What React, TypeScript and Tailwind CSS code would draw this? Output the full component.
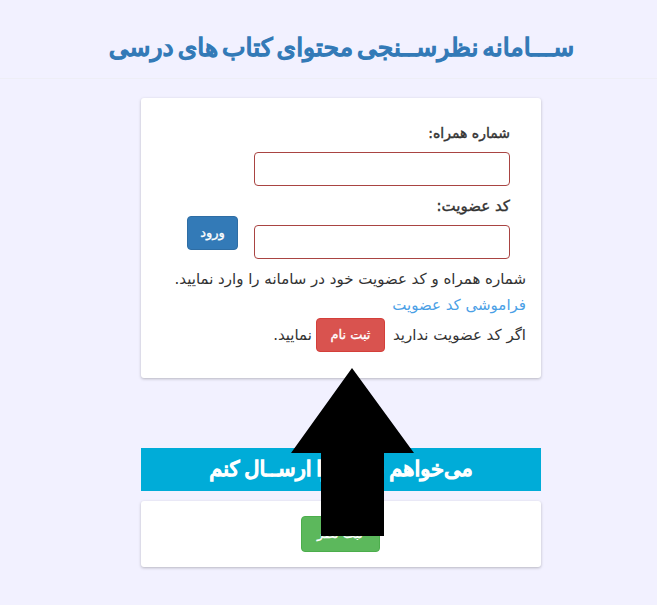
const font = { fontFamily: '"DejaVu Sans", "Noto Sans", sans-serif' };

export default function App() {
  return (
    <div dir="rtl" style={font} className="relative min-h-[605px] bg-[#f2f1ff] text-[15px] text-[#333333] overflow-hidden">
      {/* Header */}
      <div className="h-[79px] border-b border-[#eeeef6] flex items-center justify-center pl-[26px] pt-[18px]">
        <h1 className="text-[25px] leading-[30px] font-normal text-[#337ab7] whitespace-nowrap [word-spacing:-4px] [-webkit-text-stroke:1.4px_#337ab7]">
          ســـامانه نظرســنجی محتوای کتاب های درسی
        </h1>
      </div>

      <div className="w-[400px] mr-[116px] mt-[19px]">
        {/* Login card */}
        <div className="h-[280px] bg-white rounded-[3px] shadow-[0_1px_3px_rgba(0,0,0,0.25)] px-[15px] pt-[24px]">
          <div className="flex pr-[16px]">
            <div className="w-[256px]">
              <label className="block h-[30px] text-[14px] leading-[22px] [-webkit-text-stroke:0.4px_#333333]">شماره همراه:</label>
              <input className="block w-full h-[34px] bg-white border border-[#a94442] rounded-[4px]" />
              <label className="block h-[39px] pt-[9px] leading-[22px] [-webkit-text-stroke:0.4px_#333333]">کد عضویت:</label>
              <input className="block w-full h-[34px] bg-white border border-[#a94442] rounded-[4px]" />
            </div>
            <button className="mr-[16px] mt-[94px] w-[51px] h-[34px] bg-[#337ab7] border border-[#2e6da4] rounded-[4px] text-white text-[13px] [-webkit-text-stroke:0.3px_#ffffff]">
              ورود
            </button>
          </div>
          <p className="mt-[10px] leading-[20px]">شماره همراه و کد عضویت خود در سامانه را وارد نمایید.</p>
          <p className="mt-[6px] leading-[20px]">
            <a className="text-[#4aa0e6]">فراموشی کد عضویت</a>
          </p>
          <div className="mt-[3px] flex items-center whitespace-nowrap">
            <span>اگر کد عضویت ندارید</span>
            <button className="mr-[8px] ml-[4px] w-[69px] h-[34px] bg-[#d9534f] border border-[#d43f3a] rounded-[4px] text-white text-[13px] [-webkit-text-stroke:0.3px_#ffffff]">
              ثبت نام
            </button>
            <span>نمایید.</span>
          </div>
        </div>

        {/* Send opinion */}
        <div className="mt-[70px] h-[43px] bg-[#00acd8] flex items-center justify-center text-white text-[21px] whitespace-nowrap [word-spacing:-2px] [-webkit-text-stroke:1.4px_#ffffff]">
          می‌خواهم نظرم را ارســال کنم
        </div>
        <div className="mt-[10px] h-[66px] bg-white rounded-[3px] shadow-[0_1px_3px_rgba(0,0,0,0.25)] flex items-center justify-center pr-[2px]">
          <button className="w-[79px] h-[36px] bg-[#5cb85c] border border-[#4cae4c] rounded-[4px] text-white text-[13px] [-webkit-text-stroke:0.3px_#ffffff]">
            ثبت نظر
          </button>
        </div>
      </div>

      {/* Arrow drawn over the page */}
      <svg className="absolute left-[291px] top-[368px]" width="124" height="169" viewBox="0 0 124 169">
        <path d="M61 0 L123 85 L93 85 L93 168 L30 168 L30 85 L0 85 Z" fill="#000000" />
      </svg>
    </div>
  );
}
